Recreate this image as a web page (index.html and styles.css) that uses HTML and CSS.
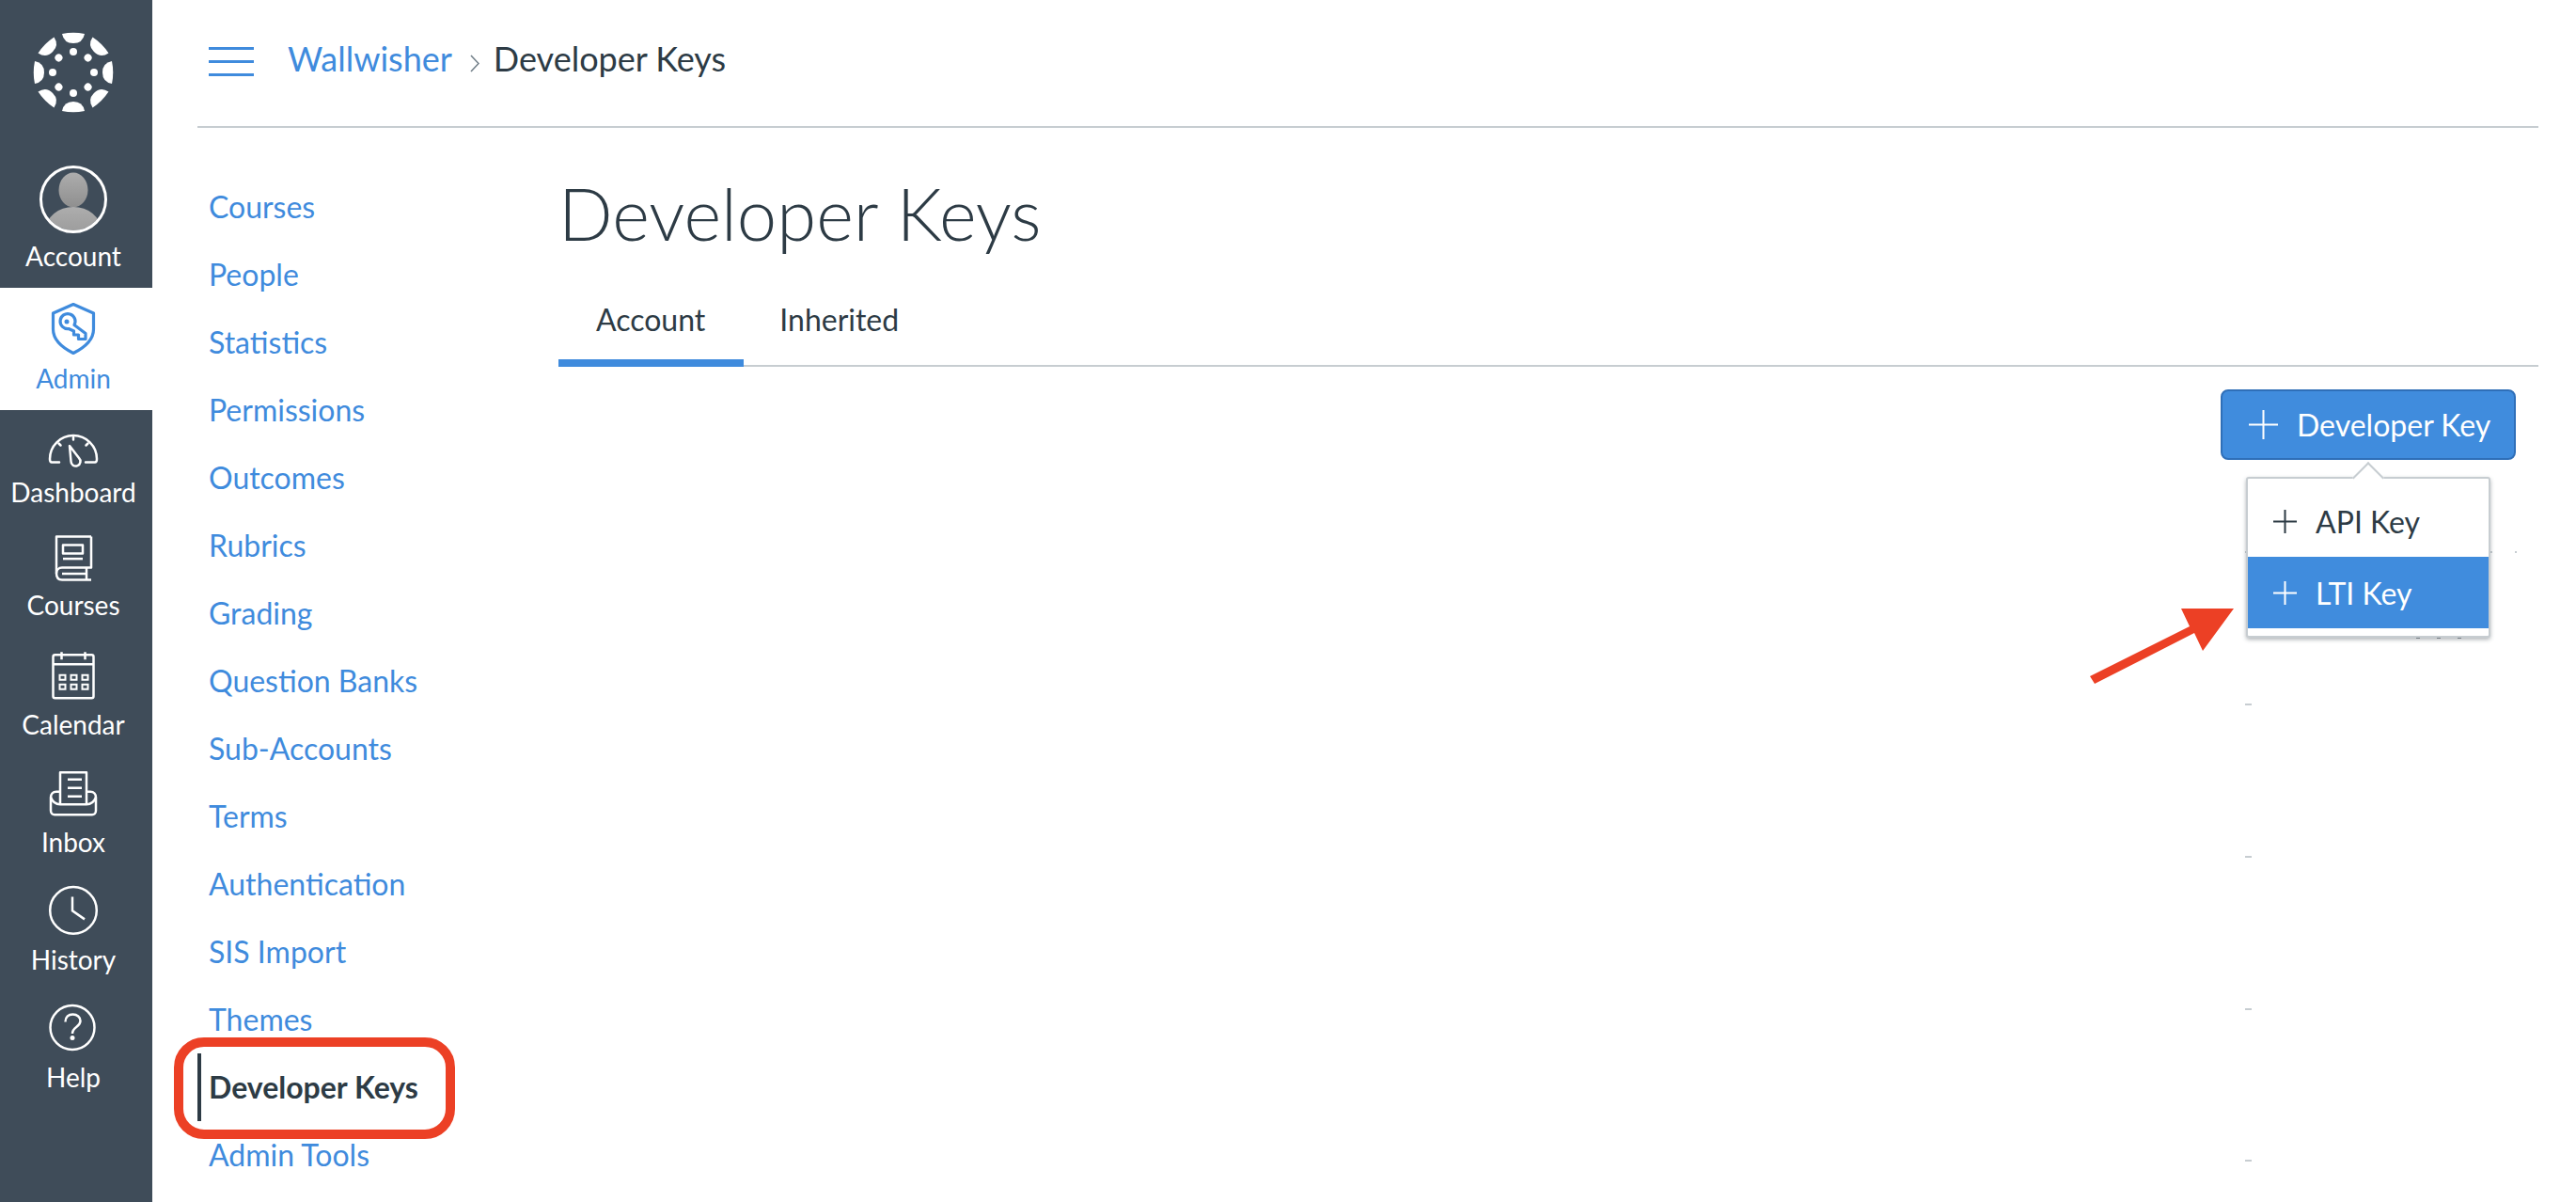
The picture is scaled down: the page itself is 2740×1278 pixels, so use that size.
FILE: index.html
```html
<!DOCTYPE html>
<html lang="en">
<head>
<meta charset="utf-8">
<title>Developer Keys</title>
<link rel="stylesheet" href="styles.css">
</head>
<body>
<div class="app">
  <nav class="rail">
    <a class="rail-logo" href="#" aria-label="Canvas">
      <svg width="100" height="100" viewBox="28 27 100 100" fill="#fff">
        <g transform="translate(78 77)">
          <g id="spoke"><path d="M-12-41Q0-43.5 12-41Q10-31 0-31Q-10-31-12-41Z"/><circle cx="0" cy="-22" r="4"/></g>
          <use href="#spoke" transform="rotate(45)"/><use href="#spoke" transform="rotate(90)"/><use href="#spoke" transform="rotate(135)"/>
          <use href="#spoke" transform="rotate(180)"/><use href="#spoke" transform="rotate(225)"/><use href="#spoke" transform="rotate(270)"/><use href="#spoke" transform="rotate(315)"/>
        </g>
      </svg>
    </a>
    <a class="rail-item rail-account" href="#">
      <svg width="76" height="80" viewBox="40 172 76 80">
        <defs>
          <clipPath id="avatarClip"><circle cx="78" cy="212" r="33"/></clipPath>
          <linearGradient id="avatarFill" x1="0" y1="0" x2="0" y2="1"><stop offset="0" stop-color="#adadad"/><stop offset="1" stop-color="#8f8f8f"/></linearGradient>
        </defs>
        <g clip-path="url(#avatarClip)" fill="url(#avatarFill)">
          <ellipse cx="78" cy="202" rx="15.5" ry="18.5"/>
          <ellipse cx="78" cy="244" rx="29" ry="24"/>
        </g>
        <circle cx="78" cy="212" r="34.5" fill="none" stroke="#fff" stroke-width="3"/>
      </svg>
      <span class="rail-label">Account</span>
    </a>
    <a class="rail-item rail-admin" href="#">
      <svg width="56" height="62" viewBox="50 318 56 62" fill="none" stroke="#3f8bdd" stroke-width="3.2" stroke-linejoin="round">
        <path d="M78 323.5L99.5 333V350C99.5 362 89 370 78 375.500C67 370 56.500 362 56.500 350V333Z"/>
        <path d="M79 345.500L91 354.500V360.500H83.500V356H78.500V352L73 349.500A8 8 0 1 1 79 345.500Z"/>
        <circle cx="71" cy="342" r="2.500" fill="#3f8bdd" stroke="none"/>
      </svg>
      <span class="rail-label">Admin</span>
    </a>
    <a class="rail-item" href="#">
      <svg width="56" height="56" viewBox="50 442 56 56" fill="none" stroke="#fff" stroke-width="2.500" stroke-linecap="round" stroke-linejoin="round">
        <path d="M63 491.500H55Q53 491.500 53 488A25 25 0 0 1 103 488Q103 491.500 101 491.500H91"/>
        <path d="M74 474L84 487A5 5 0 1 1 75.500 490.500Z"/>
        <path d="M78 465V467.500M62.500 471.500L64.500 473.500M93.500 471.500L91.500 473.500"/>
      </svg>
      <span class="rail-label">Dashboard</span>
    </a>
    <a class="rail-item rail-courses" href="#">
      <svg width="56" height="56" viewBox="50 566.400 56 56" fill="none" stroke="#fff" stroke-width="2.500" stroke-linejoin="round">
        <path d="M97 571H60V610C60 614 62 617 66 617H97"/>
        <path d="M97 571V604H66C62 604 60 607 60 610M66 610.500H92M92 604V617"/>
        <rect x="67" y="580" width="21" height="9"/>
        <path d="M67 594.500H88"/>
      </svg>
      <span class="rail-label">Courses</span>
    </a>
    <a class="rail-item rail-calendar" href="#">
      <svg width="56" height="56" viewBox="50 690.800 56 56" fill="none" stroke="#fff" stroke-width="2.500">
        <rect x="56.500" y="696" width="43" height="46" rx="2"/>
        <path d="M56.500 706H99.500M65.500 693V701M90.500 693V701"/>
        <path d="M63.500 717.500h6v5h-6zM75.500 717.500h6v5h-6zM87.500 717.500h6v5h-6zM63.500 727.500h6v5h-6zM75.500 727.500h6v5h-6zM87.500 727.500h6v5h-6z" stroke-width="2"/>
      </svg>
      <span class="rail-label">Calendar</span>
    </a>
    <a class="rail-item rail-inbox" href="#">
      <svg width="56" height="56" viewBox="50 815.200 56 56" fill="none" stroke="#fff" stroke-width="2.500" stroke-linejoin="round">
        <path d="M64 855V821.500H92V855"/>
        <path d="M72 829H87M72 838H87M72 847H87"/>
        <path d="M64 842H60C56 842 54 845 54 848V862C54 865 56 866.500 58 866.500H98C100 866.500 102 865 102 862V848C102 845 100 842 96 842H92"/>
        <path d="M54 848C56 853 60 855.500 64 855.500H92C96 855.500 100 853 102 848"/>
      </svg>
      <span class="rail-label">Inbox</span>
    </a>
    <a class="rail-item rail-history" href="#">
      <svg width="56" height="56" viewBox="50 939.600 56 56" fill="none" stroke="#fff" stroke-width="2.500">
        <circle cx="78" cy="967.500" r="24.800"/>
        <path d="M77 953V968L90 977"/>
      </svg>
      <span class="rail-label">History</span>
    </a>
    <a class="rail-item" href="#">
      <svg width="56" height="56" viewBox="50 1064 56 56" fill="none" stroke="#fff" stroke-width="2.500">
        <circle cx="77" cy="1092.500" r="23.500"/>
        <path d="M69.500 1086.500C69.500 1081 73 1078.500 77.500 1078.500C82 1078.500 85.500 1081.500 85.500 1085.500C85.500 1092 77 1091.500 77 1099"/>
        <circle cx="77" cy="1103.500" r="2.500" fill="#fff" stroke="none"/>
      </svg>
      <span class="rail-label">Help</span>
    </a>
  </nav>

  <div class="page">
    <header class="crumbs">
      <button class="menu-btn" aria-label="Menu"><span></span><span></span><span></span></button>
      <a class="crumb-link" href="#">Wallwisher</a>
      <svg class="crumb-sep" width="10" height="19" viewBox="0 0 10 19" fill="none" stroke="#73808a" stroke-width="1.600"><path d="M1 1L9 9.500L1 18"/></svg>
      <span class="crumb-current">Developer Keys</span>
    </header>
    <div class="body">
      <ul class="section-nav">
        <li><a href="#">Courses</a></li>
        <li><a href="#">People</a></li>
        <li><a href="#">Statistics</a></li>
        <li><a href="#">Permissions</a></li>
        <li><a href="#">Outcomes</a></li>
        <li><a href="#">Rubrics</a></li>
        <li><a href="#">Grading</a></li>
        <li><a href="#">Question Banks</a></li>
        <li><a href="#">Sub-Accounts</a></li>
        <li><a href="#">Terms</a></li>
        <li><a href="#">Authentication</a></li>
        <li><a href="#">SIS Import</a></li>
        <li><a href="#">Themes</a></li>
        <li class="is-active"><a href="#">Developer Keys</a></li>
        <li><a href="#">Admin Tools</a></li>
      </ul>
      <main class="content">
        <h1 class="title">Developer Keys</h1>
        <div class="tabs">
          <a class="tab is-active" href="#">Account</a>
          <a class="tab" href="#">Inherited</a>
        </div>
        <div class="actions">
          <div class="action-wrap">
            <button class="btn-primary">
              <svg width="31" height="31" viewBox="0 0 31 31" stroke="#fff" stroke-width="2"><path d="M0 15.500H31M15.500 0V31"/></svg>
              <span>Developer Key</span>
            </button>
            <div class="popover">
              <a class="pop-item" href="#">
                <svg width="25" height="25" viewBox="0 0 25 25" stroke="currentColor" stroke-width="2"><path d="M0 12.500H25M12.500 0V25"/></svg>
                <span>API Key</span>
              </a>
              <a class="pop-item is-active" href="#">
                <svg width="25" height="25" viewBox="0 0 25 25" stroke="currentColor" stroke-width="2"><path d="M0 12.500H25M12.500 0V25"/></svg>
                <span>LTI Key</span>
              </a>
            </div>
          </div>
        </div>
        <div class="row-edges"><i></i><i></i><i></i></div>
        <div class="row-ticks"><i></i><i></i><i></i><i></i></div>
      </main>
    </div>
  </div>

  <div class="note-box"></div>
  <svg class="note-arrow" width="160" height="90" viewBox="2220 645 160 90"><path fill="#ec4025" d="M2223 719L2329 666L2320 647H2376L2343 692L2334 673L2228 727Z"/></svg>
</div>
</body>
</html>
```
FILE: styles.css
```css
* { box-sizing: border-box; }
html, body { margin: 0; height: 100%; background: #fff; overflow: hidden; }
body { font-family: Lato, "Open Sans", sans-serif; color: #2d3b45; }
a { text-decoration: none; color: inherit; }
ul { list-style: none; margin: 0; padding: 0; }

.app { position: relative; display: flex; width: 2740px; height: 1278px; }

/* Global rail */
.rail { flex: 0 0 162px; height: 100%; background: #3f4c59; padding-right: 6px; display: flex; flex-direction: column; }
.rail svg { display: block; }
.rail-logo { height: 134px; display: flex; justify-content: center; padding-top: 27px; }
.rail-item { height: 124.4px; padding-top: 6px; display: flex; flex-direction: column; align-items: center; color: #fff; }
.rail-label { display: block; margin-top: 8px; font-size: 28px; line-height: 34px; white-space: nowrap; }
.rail-account { height: 172px; padding-top: 38px; }
.rail-account .rail-label { margin-top: 3px; }
.rail-admin { height: 130px; padding-top: 12px; margin-right: -6px; padding-right: 6px; background: #fff; color: #3f8bdd; }
.rail-admin .rail-label { margin-top: 5px; }
.rail-courses .rail-label { margin-top: 4px; }
.rail-calendar .rail-label { margin-top: 6px; }
.rail-inbox .rail-label { margin-top: 7px; }
.rail-history .rail-label { margin-top: 7px; }

/* Page */
.page { flex: 1; min-width: 0; margin: 0 40px 0 48px; display: flex; flex-direction: column; }
.crumbs { height: 136px; flex: none; border-bottom: 2px solid #c7cdd1; display: flex; align-items: center; padding: 0 0 4px 12px; font-size: 36px; }
.menu-btn { width: 48px; height: 31px; padding: 0; margin: 0 36px 0 0; border: 0; background: none; display: flex; flex-direction: column; justify-content: space-between; }
.menu-btn span { display: block; height: 3px; background: #3f8bdd; }
.crumb-link { color: #3f8bdd; margin-bottom: 7px; }
.crumb-sep { margin: 4px 15px 0 19px; }
.crumb-current { color: #2d3b45; margin-bottom: 7px; }

.body { flex: 1; min-height: 0; display: flex; padding-top: 48px; }
.section-nav { flex: 0 0 384px; padding-left: 12px; font-size: 32px; }
.section-nav li { position: relative; height: 72px; line-height: 72px; color: #3f8bdd; white-space: nowrap; }
.section-nav .is-active { font-weight: 700; color: #2d3b45; }
.section-nav .is-active::before { content: ""; position: absolute; left: -12px; top: 0; width: 4px; height: 72px; background: #2d3b45; }

.content { flex: 1; min-width: 0; }
.title { margin: -2px 0 0; height: 96px; font-size: 76px; font-weight: 300; line-height: 90px; color: #2d3b45; }
.tabs { height: 112px; display: flex; align-items: flex-end; border-bottom: 2px solid #c7cdd1; font-size: 32px; }
.tab { height: 112px; padding: 44px 41px 0 40px; line-height: 36px; margin-bottom: -2px; border-bottom: 8px solid transparent; }
.tab + .tab { padding-left: 38px; }
.tab.is-active { border-bottom-color: #3f8bdd; }

.actions { display: flex; justify-content: flex-end; padding: 24px 24px 0 0; }
.action-wrap { position: relative; }
.btn-primary { width: 314px; height: 75px; padding: 0 0 0 28px; display: flex; align-items: center; gap: 20px; border: 2px solid #2f6fb8; border-radius: 8px; background: #408cdd; color: #fff; font: 400 32px Lato, sans-serif; white-space: nowrap; }

.popover { position: absolute; z-index: 2; top: 93px; left: 27px; width: 260px; height: 171px; padding-top: 7px; background: #fff; border: 2px solid #c7cdd1; border-radius: 3px; box-shadow: 0 2px 4px rgba(80, 90, 100, .45); font-size: 32px; }
.popover::before { content: ""; position: absolute; top: -13px; left: 116px; width: 22px; height: 22px; background: #fff; border-top: 2px solid #c7cdd1; border-left: 2px solid #c7cdd1; transform: rotate(45deg); }
.popover::after { content: ""; position: absolute; left: 179px; bottom: -3px; width: 63px; height: 1px; background: repeating-linear-gradient(90deg, rgba(60, 70, 80, .6) 0 4px, transparent 4px 22px); }
.pop-item { position: relative; height: 76px; padding-left: 27px; display: flex; align-items: center; gap: 20px; color: #2d3b45; }
.pop-item.is-active { background: #408cdd; color: #fff; }

.row-edges { display: flex; width: 289px; margin: 97px 23px 0 auto; height: 2px; }
.row-edges i { display: block; width: 2px; height: 2px; background: #c7cdd1; }
.row-edges i:nth-child(2) { margin-left: 259px; }
.row-edges i:nth-child(3) { margin-left: 24px; }
.row-ticks { display: flex; flex-direction: column; gap: 159.800px; margin: 160px 0 0 1794px; }
.row-ticks i { display: block; width: 7px; height: 2px; background: #c7cdd1; }

/* Annotations */
.note-box { position: absolute; left: 185px; top: 1103px; width: 299px; height: 108px; border: 10px solid #ec4025; border-radius: 32px; }
.note-arrow { position: absolute; z-index: 3; left: 2220px; top: 645px; }
```
